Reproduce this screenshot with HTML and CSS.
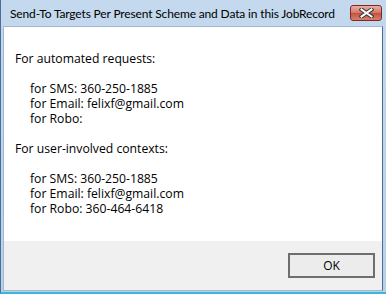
FILE: index.html
```html
<!DOCTYPE html>
<html lang="en">
<head>
<meta charset="UTF-8">
<title>Send-To Targets</title>
<link rel="stylesheet" href="styles.css">
</head>
<body>

<div class="window">
  <div class="titlebar">
    <span class="title">Send-To Targets Per Present Scheme and Data in this JobRecord</span>
    <div class="close">
      <svg width="15" height="10" viewBox="0 0 15 10">
        <path d="M2.5 1.5 L12.5 8.5 M12.5 1.5 L2.5 8.5" stroke="#3a3a3a" stroke-width="4" stroke-linecap="square"/>
        <path d="M2.5 1.5 L12.5 8.5 M12.5 1.5 L2.5 8.5" stroke="#fff" stroke-width="2" stroke-linecap="square"/>
      </svg>
    </div>
  </div>

  <div class="client">
    <div class="content">
      <p>For automated requests:</p>
      <p class="blank">&nbsp;</p>
      <p class="item">for SMS: 360-250-1885</p>
      <p class="item">for Email: felixf@gmail.com</p>
      <p class="item">for Robo:</p>
      <p class="blank">&nbsp;</p>
      <p>For user-involved contexts:</p>
      <p class="blank">&nbsp;</p>
      <p class="item">for SMS: 360-250-1885</p>
      <p class="item">for Email: felixf@gmail.com</p>
      <p class="item">for Robo: 360-464-6418</p>
    </div>
    <div class="footer">
      <button class="btn">OK</button>
    </div>
  </div>
</div>

</body>
</html>
```

FILE: styles.css
```css
body {
  margin: 0;
  font-family: "Open Sans", "Noto Sans", sans-serif;
  background: #fff;
}
.window {
  width: 386px;
  height: 294px;
  box-sizing: border-box;
  display: flex;
  flex-direction: column;
  background: linear-gradient(#c4d8ee, #b9d0e9);
  border-left: 1px solid #4d6e94;
  border-bottom: 2px solid #3ab6d8;
  padding: 0 3px 1px 2px;
}

/* title bar */
.titlebar {
  height: 26px;
  display: flex;
  align-items: flex-start;
  justify-content: space-between;
  flex-shrink: 0;
}
.title {
  font-family: Lato, "Open Sans", sans-serif;
  font-size: 12px;
  letter-spacing: -0.15px;
  white-space: nowrap;
  color: #000;
  margin: 6px 0 0 7px;
}
.close {
  width: 30px;
  height: 14px;
  margin: 5px 1px 0 0;
  border: 1px solid #7a2a26;
  border-radius: 3px;
  background: linear-gradient(#e9b0a4, #d27563 50%, #c4503e 51%, #d8806a);
  display: flex;
  align-items: center;
  justify-content: center;
}

/* client area */
.client {
  flex: 1;
  display: flex;
  flex-direction: column;
  border: 1px solid #a3b8d0;
  border-right-color: #4d6e94;
  background: #fff;
}
.content {
  flex: 1;
  padding: 24px 0 0 11px;
  font-size: 12.2px;
  line-height: 15px;
  color: #000;
}
.content p {
  margin: 0;
}
.content .item {
  padding-left: 15px;
}
.footer {
  height: 49px;
  box-sizing: border-box;
  background: #f0f0f0;
  display: flex;
  justify-content: flex-end;
  padding: 12px 7px 0 0;
}
.btn {
  width: 87px;
  height: 25px;
  font-family: inherit;
  font-size: 12px;
  color: #000;
  background: #ececec;
  border: 2px solid #6e6e6e;
  border-radius: 0;
  padding: 0;
}
```
